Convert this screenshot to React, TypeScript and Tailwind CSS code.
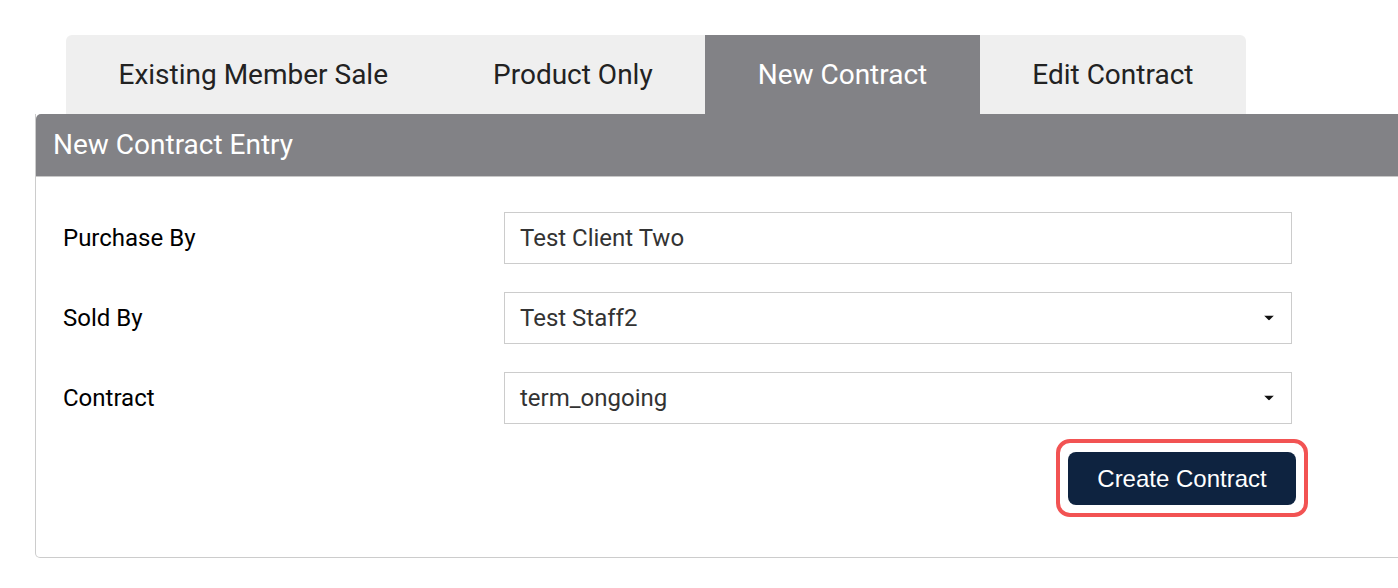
import { useState } from "react"

const tabs = ["Existing Member Sale", "Product Only", "New Contract", "Edit Contract"]

function Caret(){
  return (
    <svg width="10" height="5" viewBox="0 0 10 5" className="absolute right-[17px] top-1/2 -translate-y-1/2">
      <path d="M0 0 L10 0 L5 5 Z" fill="#111" />
    </svg>
  )
}

function Row({label,children}:{label:string,children:any}){
  return (
    <div className="flex items-center h-[52px]">
      <div className="w-[441px] text-[24px] text-black">{label}</div>
      <div className="relative w-[788px] h-[52px] border border-[#cccccc] bg-white flex items-center px-[15px] text-[24px] text-[#333]">
        {children}
      </div>
    </div>
  )
}

export default function App(){
  const [active,setActive]=useState(2)

  return (
    <div className="w-[1398px] h-[588px] overflow-hidden bg-white" style={{fontFamily:"Roboto, 'Noto Sans', sans-serif"}}>

      {/* TABS */}
      <div className="pt-[35px] pl-[66px]">
        <div className="flex w-max bg-[#efefef] rounded-t-[6px] overflow-hidden">
          {tabs.map((t,i)=>(
            <button
              key={t}
              onClick={()=>setActive(i)}
              className={`h-[79px] px-[52.5px] text-[28px] ${active===i ? "bg-[#828286] text-white" : "text-[#222]"}`}
            >
              {t}
            </button>
          ))}
        </div>
      </div>

      {/* PANEL */}
      <div className="ml-[35px] w-[1400px] border border-[#cccccc] border-t-0 rounded-b-[5px]">
        <div className="h-[63px] bg-[#828286] border-b border-[#c8c8c8] rounded-tl-[5px] flex items-center pl-[17px] text-[28px] text-white">
          New Contract Entry
        </div>

        <div className="pl-[27px] pt-[35px] pb-[40px] w-[1257px]">
          <div className="flex flex-col gap-[28px]">
            <Row label="Purchase By">Test Client Two</Row>
            <Row label="Sold By">Test Staff2<Caret/></Row>
            <Row label="Contract">term_ongoing<Caret/></Row>
          </div>

          <div className="flex justify-end mt-[15px] -mr-[15px]">
            <div className="border-4 border-[#f25353] rounded-[14px] pl-[8px] pr-[8px] pt-[9px] pb-[8px]">
              <button
                className="h-[53px] w-[228px] rounded-[8px] bg-[#0e2340] text-white text-[24px]"
                style={{fontFamily:"'Liberation Sans', Arial, sans-serif"}}
              >
                Create Contract
              </button>
            </div>
          </div>
        </div>
      </div>

    </div>
  )
}
